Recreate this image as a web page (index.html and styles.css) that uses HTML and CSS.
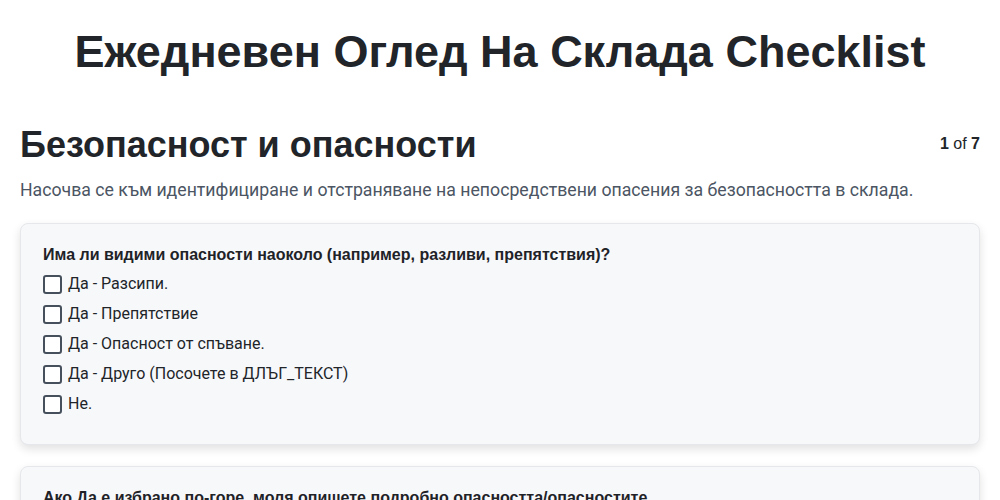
FILE: index.html
```html
<!DOCTYPE html>
<html lang="bg">
<head>
<meta charset="utf-8">
<title>Checklist</title>
<link rel="stylesheet" href="styles.css">
</head>
<body>
<main class="page">
  <h1 class="title">Ежедневен Оглед На Склада Checklist</h1>
  <section class="section">
    <div class="section-head">
      <h2 class="section-title">Безопасност и опасности</h2>
      <div class="counter"><b>1</b> of <b>7</b></div>
    </div>
    <p class="section-desc">Насочва се към идентифициране и отстраняване на непосредствени опасения за безопасността в склада.</p>
    <div class="card">
      <div class="question">Има ли видими опасности наоколо (например, разливи, препятствия)?</div>
      <label class="option"><span class="box"></span>Да - Разсипи.</label>
      <label class="option"><span class="box"></span>Да - Препятствие</label>
      <label class="option"><span class="box"></span>Да - Опасност от спъване.</label>
      <label class="option"><span class="box"></span>Да - Друго (Посочете в ДЛЪГ_ТЕКСТ)</label>
      <label class="option"><span class="box"></span>Не.</label>
    </div>
    <div class="card">
      <div class="question">Ако Да е избрано по-горе, моля опишете подробно опасността/опасностите</div>
    </div>
  </section>
</main>
</body>
</html>
```

FILE: styles.css
```css
* { box-sizing: border-box; }
body {
  margin: 0;
  background: #ffffff;
  color: #212529;
  font-family: Roboto, "Liberation Sans", sans-serif;
}
.page {
  padding: 0 20px;
}
.title {
  margin: 0;
  padding: 27px 0 0;
  text-align: center;
  font-family: "Liberation Sans", Arial, sans-serif;
  font-weight: 700;
  font-size: 45px;
  line-height: 50px;
  color: #212529;
}
.section {
  margin-top: 46px;
}
.section-head {
  display: flex;
  justify-content: space-between;
  align-items: flex-start;
}
.section-title {
  margin: 0;
  font-family: "Liberation Sans", Arial, sans-serif;
  font-weight: 700;
  font-size: 36px;
  line-height: 44px;
  color: #212529;
}
.counter {
  font-family: "Liberation Sans", Arial, sans-serif;
  font-size: 16px;
  color: #212529;
  padding-top: 12px;
}
.section-desc {
  margin: 10px 0 20px;
  font-size: 17.7px;
  line-height: 26px;
  color: #4b5563;
}
.card {
  background: #f7f8fa;
  border: 1px solid #e5e7eb;
  border-radius: 8px;
  box-shadow: 0 4px 10px rgba(0, 0, 0, 0.12);
  padding: 20px 22px 25px;
  margin-bottom: 21px;
}
.question {
  font-family: "Liberation Sans", Arial, sans-serif;
  font-weight: 700;
  font-size: 16px;
  line-height: 22px;
  color: #1f2328;
  margin-bottom: 3px;
}
.option {
  display: flex;
  align-items: center;
  gap: 6px;
  font-size: 16px;
  line-height: 22px;
  color: #212529;
  height: 30px;
}
.box {
  width: 19px;
  height: 19px;
  border: 2px solid #464f5c;
  border-radius: 3px;
  background: #ffffff;
  flex: none;
}
```
